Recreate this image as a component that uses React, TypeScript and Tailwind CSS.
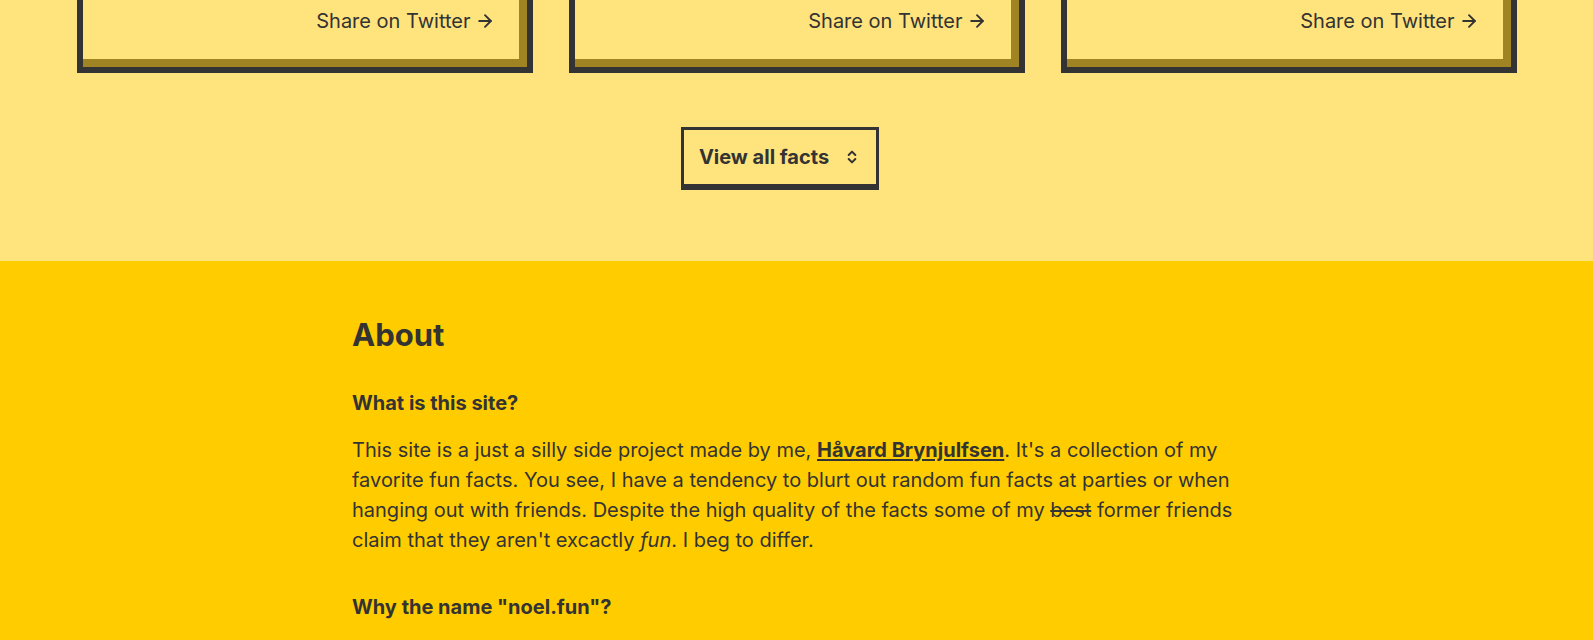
import * as React from "react";
import { ArrowRight, ChevronsUpDown } from "lucide-react";

const font = { fontFamily: "Inter, 'Noto Sans', sans-serif" };

const FactCard: React.FC = () => (
    <div className="flex justify-end border-[6px] border-t-0 border-[#333] bg-[#ffe37d] pt-[7px] pr-[32px] pb-[32px] shadow-[inset_-8px_-8px_0_#a08424]">
        <a className="flex items-center gap-1 text-[20px] leading-[28px] text-[#333]">
            Share on Twitter
            <ArrowRight size={20} strokeWidth={2.25} />
        </a>
    </div>
);

export default function App() {
    return (
        <div className="min-h-screen bg-[#ffcc00] text-[#333]" style={font}>
            <section className="flex h-[261px] flex-col items-center bg-[#ffe37d]">
                <div className="grid w-[1440px] grid-cols-3 gap-9">
                    <FactCard />
                    <FactCard />
                    <FactCard />
                </div>
                <div className="mt-[54px] pr-[33px]">
                    <button className="flex items-center gap-[15px] border-[3px] border-[#333] py-[13px] pr-[16px] pl-[15px] text-[20px] leading-[28px] font-bold shadow-[0_3px_0_#333]">
                        View all facts
                        <ChevronsUpDown size={16} strokeWidth={3} />
                    </button>
                </div>
            </section>
            <section className="mx-auto w-[889px] pt-[55px]">
                <h2 className="text-[31px] leading-[38px] font-bold">About</h2>
                <h3 className="mt-[35px] text-[20px] leading-[28px] font-bold">
                    What is this site?
                </h3>
                <p className="mt-[18px] text-[20px] leading-[30px]">
                    This site is a just a silly side project made by me,{" "}
                    <a className="font-bold underline decoration-2 underline-offset-2">
                        Håvard Brynjulfsen
                    </a>
                    . It's a collection of my favorite fun facts. You see, I
                    have a tendency to blurt out random fun facts at parties or
                    when hanging out with friends. Despite the high quality of
                    the facts some of my <s>best</s> former friends claim that
                    they aren't excactly <em>fun</em>. I beg to differ.
                </p>
                <h3 className="mt-[38px] text-[20px] leading-[28px] font-bold">
                    Why the name "noel.fun"?
                </h3>
            </section>
        </div>
    );
}
